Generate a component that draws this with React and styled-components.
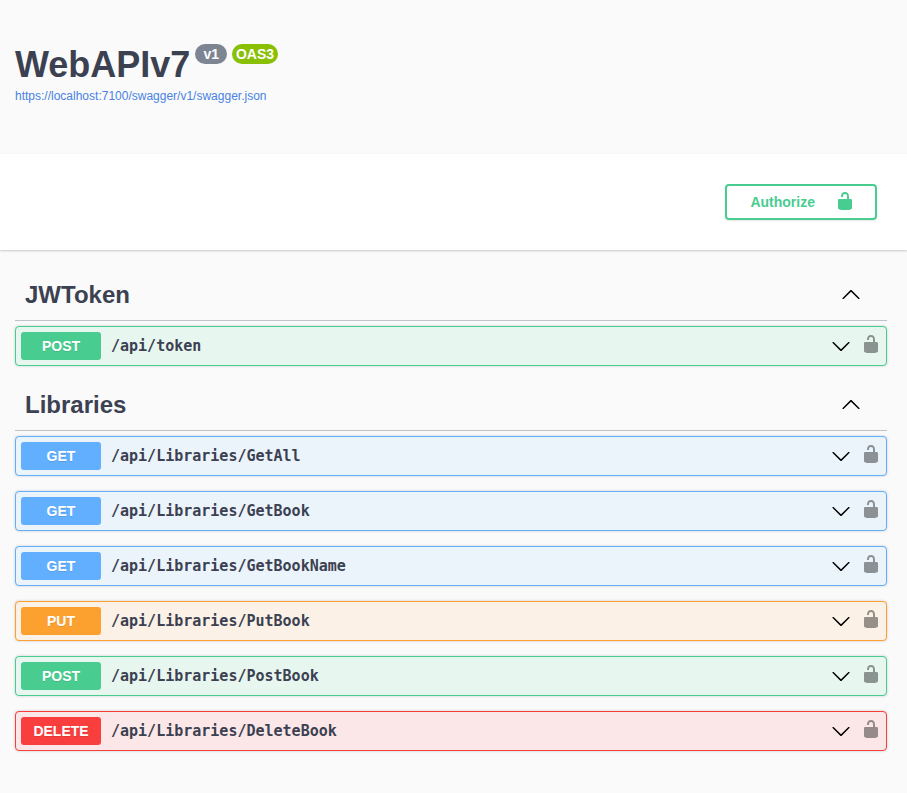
import React from 'react';
import styled, { createGlobalStyle } from 'styled-components';

const GlobalStyle = createGlobalStyle`
  *, *::before, *::after { box-sizing: border-box; }
  body {
    margin: 0;
    background: #fafafa;
    color: #3b4151;
    font-family: "Liberation Sans", Arial, sans-serif;
  }
`;

const METHOD_COLORS = {
  GET: { solid: '#61affe', tint: '#ebf3fb' },
  POST: { solid: '#49cc90', tint: '#e8f6f0' },
  PUT: { solid: '#fca130', tint: '#fbf1e6' },
  DELETE: { solid: '#f93e3e', tint: '#fbe7e7' },
};

const SECTIONS = [
  { name: 'JWToken', operations: [['POST', '/api/token']] },
  {
    name: 'Libraries',
    operations: [
      ['GET', '/api/Libraries/GetAll'],
      ['GET', '/api/Libraries/GetBook'],
      ['GET', '/api/Libraries/GetBookName'],
      ['PUT', '/api/Libraries/PutBook'],
      ['POST', '/api/Libraries/PostBook'],
      ['DELETE', '/api/Libraries/DeleteBook'],
    ],
  },
];

const Info = styled.header`
  padding: 44px 15px 50px;
`;

const TitleRow = styled.div`
  display: flex;
  align-items: flex-start;
  gap: 5px;
`;

const Title = styled.h1`
  margin: 0;
  font-size: 36px;
  line-height: 42px;
`;

const Badge = styled.span`
  padding: 0 ${(p) => (p.$wide ? 4 : 8)}px;
  border-radius: 20px;
  background: ${(p) => p.$color};
  color: #fff;
  font-size: 14px;
  font-weight: 700;
  line-height: 20px;
`;

const SpecLink = styled.a`
  display: block;
  width: fit-content;
  margin-top: 2px;
  color: #4982e2;
  font-size: 12px;
  line-height: 16px;
  text-decoration: none;
`;

const SchemeBar = styled.div`
  display: flex;
  justify-content: flex-end;
  padding: 30px;
  background: #fff;
  box-shadow: 0 1px 2px rgba(0, 0, 0, 0.2);
`;

const Icon = styled.svg`
  display: block;
  flex: none;
  width: 20px;
  height: 20px;
  fill: currentColor;
`;

const AuthorizeButton = styled.button`
  display: flex;
  align-items: center;
  gap: 20px;
  height: 36px;
  padding: 0 20px 0 23px;
  border: 2px solid #49cc90;
  border-radius: 4px;
  background: transparent;
  box-shadow: 0 1px 2px rgba(0, 0, 0, 0.1);
  color: #49cc90;
  font: 700 14px "Liberation Sans", Arial, sans-serif;
  cursor: pointer;

  ${Icon} { margin-bottom: 2px; }
`;

const Main = styled.main`
  padding: 21px 20px 26px 15px;
`;

const SectionHeader = styled.h2`
  margin: 0 0 5px;
  border-bottom: 1px solid rgba(59, 65, 81, 0.3);
`;

const SectionToggle = styled.button`
  display: flex;
  align-items: center;
  justify-content: space-between;
  width: 100%;
  height: 49px;
  padding: 0 26px 2px 10px;
  border: 0;
  background: transparent;
  color: #3b4151;
  font: 700 24px "Liberation Sans", Arial, sans-serif;
  cursor: pointer;

  ${Icon} {
    margin-bottom: 2px;
    color: #000;
  }
`;

const Operation = styled.div`
  display: flex;
  align-items: center;
  height: 40px;
  margin-bottom: 15px;
  padding: 0 5px;
  border: 1px solid ${(p) => METHOD_COLORS[p.$method].solid};
  border-radius: 4px;
  background: ${(p) => METHOD_COLORS[p.$method].tint};
  box-shadow: 0 0 3px rgba(0, 0, 0, 0.19);
`;

const OperationToggle = styled.button`
  display: flex;
  flex: 1;
  align-items: center;
  min-width: 0;
  height: 100%;
  padding: 0;
  border: 0;
  background: transparent;
  color: #000;
  cursor: pointer;
`;

const Method = styled.span`
  width: 80px;
  margin-right: 10px;
  border-radius: 3px;
  background: ${(p) => METHOD_COLORS[p.$method].solid};
  color: #fff;
  font: 700 14px/28px "Liberation Sans", Arial, sans-serif;
  text-align: center;
  text-shadow: 0 1px 0 rgba(0, 0, 0, 0.1);
`;

const Path = styled.span`
  flex: 1;
  min-width: 0;
  color: #3b4151;
  font: 700 15px/20px "DejaVu Sans Mono", monospace;
  text-align: left;
  overflow-wrap: anywhere;
`;

const LockButton = styled.button`
  margin-left: 10px;
  padding: 0 0 5px;
  border: 0;
  background: transparent;
  color: #000;
  opacity: 0.4;
  cursor: pointer;
`;

const UnlockedIcon = () => (
  <Icon viewBox="0 0 20 20" aria-hidden="true">
    <path d="M15.8 8H14V5.6C14 2.703 12.665 1 10 1 7.334 1 6 2.703 6 5.6V6h2v-.801C8 3.754 8.797 3 10 3c1.203 0 2 .754 2 2.199V8H4c-.553 0-1 .646-1 1.199V17c0 .549.428 1.139.951 1.307l1.197.387C5.672 18.861 6.55 19 7.1 19h5.8c.549 0 1.428-.139 1.951-.307l1.196-.387c.524-.167.953-.757.953-1.306V9.199C17 8.646 16.352 8 15.8 8z" />
  </Icon>
);

const ArrowDown = () => (
  <Icon viewBox="0 0 20 20" aria-hidden="true">
    <path d="M17.418 6.109c.272-.268.709-.268.979 0s.271.701 0 .969l-7.908 7.83c-.27.268-.707.268-.979 0l-7.908-7.83c-.27-.268-.27-.701 0-.969.271-.268.709-.268.979 0L10 13.25l7.418-7.141z" />
  </Icon>
);

const ArrowUp = () => (
  <Icon viewBox="0 0 20 20" aria-hidden="true">
    <path d="M17.418 14.908c.272.268.709.268.979 0s.271-.701 0-.969l-7.908-7.83c-.27-.268-.707-.268-.979 0l-7.908 7.83c-.27.268-.27.701 0 .969.271.268.709.268.979 0L10 7.767l7.418 7.141z" />
  </Icon>
);

export default function App() {
  return (
    <>
      <GlobalStyle />
      <Info>
        <TitleRow>
          <Title>WebAPIv7</Title>
          <Badge $color="#7d8492">v1</Badge>
          <Badge $color="#89bf04" $wide>OAS3</Badge>
        </TitleRow>
        <SpecLink href="https://localhost:7100/swagger/v1/swagger.json">
          https://localhost:7100/swagger/v1/swagger.json
        </SpecLink>
      </Info>
      <SchemeBar>
        <AuthorizeButton type="button">
          Authorize
          <UnlockedIcon />
        </AuthorizeButton>
      </SchemeBar>
      <Main>
        {SECTIONS.map((section) => (
          <section key={section.name}>
            <SectionHeader>
              <SectionToggle type="button" aria-expanded="true">
                {section.name}
                <ArrowUp />
              </SectionToggle>
            </SectionHeader>
            {section.operations.map(([method, path]) => (
              <Operation key={path} $method={method}>
                <OperationToggle type="button" aria-expanded="false">
                  <Method $method={method}>{method}</Method>
                  <Path>{path}</Path>
                  <ArrowDown />
                </OperationToggle>
                <LockButton type="button" aria-label={`Authorize ${path}`}>
                  <UnlockedIcon />
                </LockButton>
              </Operation>
            ))}
          </section>
        ))}
      </Main>
    </>
  );
}
